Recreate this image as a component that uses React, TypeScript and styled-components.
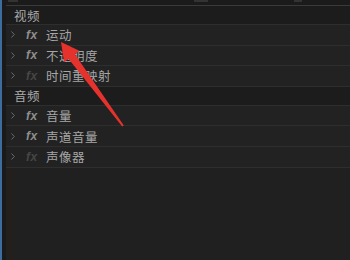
import { createGlobalStyle, styled } from "styled-components";

const GlobalStyle = createGlobalStyle`
  html, body {
    margin: 0;
    padding: 0;
    width: 350px;
    height: 260px;
    overflow: hidden;
    background: #202020;
  }
  #root {
    height: 100%;
  }
`;

const Frame = styled.div`
  position: relative;
  display: flex;
  width: 350px;
  height: 260px;
  background: #202020;
  font-family: "Noto Sans CJK SC", "Noto Sans", sans-serif;
`;

const BlueEdge = styled.div`
  width: 2px;
  background: #3d6d9e;
`;

const DarkGap = styled.div`
  width: 4px;
  background: #1a1a1a;
`;

const Panel = styled.div`
  flex: 1;
  display: flex;
  flex-direction: column;
`;

const TopBar = styled.div`
  height: 5px;
  background: #1b1b1b;
  border-bottom: 1px solid #3a3a3a;
  display: flex;
  align-items: flex-start;
  gap: 6px;
  padding-left: 2px;
`;

const TabStub = styled.div<{ $w: number; $ml?: number }>`
  width: ${(p) => p.$w}px;
  margin-left: ${(p) => p.$ml ?? 0}px;
  height: 2px;
  background: #333;
`;

const SectionHeader = styled.div`
  height: 18px;
  display: flex;
  align-items: center;
  padding-left: 8px;
  background: #1c1c1c;
  border-bottom: 1px solid #2e2e2e;
  color: #ababab;
  font-size: 12.5px;
  letter-spacing: 0.5px;
`;

const Row = styled.div`
  height: 19.6px;
  display: flex;
  align-items: center;
  background: #222222;
  border-bottom: 1px solid #2e2e2e;
`;

const Chevron = styled.svg`
  width: 4px;
  height: 7px;
  margin-left: 5px;
`;

const Fx = styled.span<{ $dim?: boolean }>`
  margin-left: 11px;
  width: 20px;
  font-family: "Liberation Sans", sans-serif;
  font-style: italic;
  font-weight: bold;
  font-size: 12px;
  letter-spacing: 0.5px;
  color: ${(p) => (p.$dim ? "#464646" : "#8e8e8e")};
`;

const Label = styled.span`
  color: #a6a6a6;
  font-size: 12.5px;
  letter-spacing: 0.5px;
`;

const Filler = styled.div`
  flex: 1;
  display: flex;
`;

const Gutter = styled.div`
  width: 7px;
  margin-left: 1px;
  background: #231f1c;
`;

const Arrow = styled.svg`
  position: absolute;
  left: 0;
  top: 0;
  pointer-events: none;
`;

type Item = { label: string; dim?: boolean };

const video: Item[] = [
  { label: "运动" },
  { label: "不透明度" },
  { label: "时间重映射", dim: true },
];

const audio: Item[] = [
  { label: "音量" },
  { label: "声道音量" },
  { label: "声像器", dim: true },
];

function EffectRow({ label, dim }: Item) {
  return (
    <Row>
      <Chevron viewBox="0 0 4 7">
        <path d="M0.5 0.5 L3.3 3.5 L0.5 6.5" fill="none" stroke="#6b6b6b" strokeWidth="1" />
      </Chevron>
      <Fx $dim={dim}>fx</Fx>
      <Label>{label}</Label>
    </Row>
  );
}

export default function App() {
  return (
    <>
      <GlobalStyle />
      <Frame>
        <BlueEdge />
        <DarkGap />
        <Panel>
          <TopBar>
            <TabStub $w={10} />
            <TabStub $w={14} $ml={170} />
            <TabStub $w={8} $ml={80} />
          </TopBar>
          <SectionHeader>视频</SectionHeader>
          {video.map((it) => (
            <EffectRow key={it.label} {...it} />
          ))}
          <SectionHeader>音频</SectionHeader>
          {audio.map((it) => (
            <EffectRow key={it.label} {...it} />
          ))}
          <Filler>
            <Gutter />
          </Filler>
        </Panel>
        <Arrow width="350" height="260" viewBox="0 0 350 260">
          <polygon
            points="61,42 79.3,50.8 74.9,54.2 123.8,125.4 122.2,126.6 68.5,58.8 64.1,62.2"
            fill="#e5322d"
          />
        </Arrow>
      </Frame>
    </>
  );
}
